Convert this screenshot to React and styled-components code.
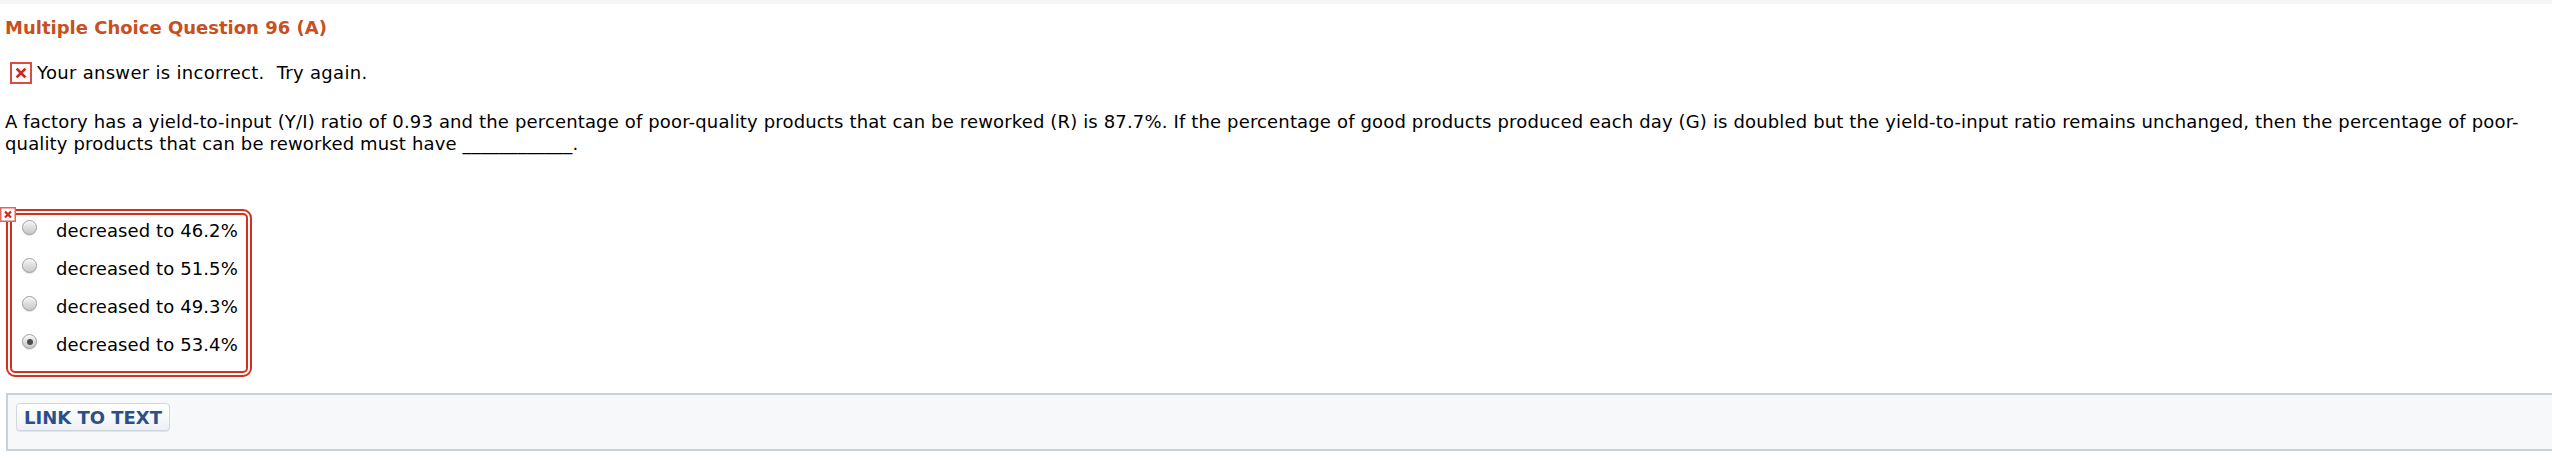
import styled, { createGlobalStyle } from "styled-components";

const GlobalStyle = createGlobalStyle`
  html, body {
    margin: 0;
    padding: 0;
    background: #fff;
    overflow: hidden;
  }
  body {
    font-family: "DejaVu Sans", Verdana, sans-serif;
    font-size: 18px;
    line-height: 22px;
    color: #000;
  }
`;

const options = [
  { id: "a", label: "decreased to 46.2%" },
  { id: "b", label: "decreased to 51.5%" },
  { id: "c", label: "decreased to 49.3%" },
  { id: "d", label: "decreased to 53.4%", checked: true },
];

const TopStrip = styled.div`
  height: 4px;
  background: #f4f5f7;
`;

const Page = styled.div`
  padding: 13px 0 0 5px;
`;

const Title = styled.h1`
  margin: 0;
  font-size: 18px;
  line-height: 22px;
  font-weight: bold;
  color: #c8501d;
`;

const Feedback = styled.div`
  display: flex;
  align-items: center;
  gap: 5px;
  margin: 23px 0 0 5px;
  height: 22px;
  letter-spacing: 0.3px;
`;

const Question = styled.p`
  margin: 27px 0 0;
  padding-right: 8px;
  letter-spacing: 0.15px;
`;

const AnswerWrap = styled.div`
  position: relative;
  display: inline-block;
  margin: 54px 0 0 1px;
`;

const ErrorMark = styled.span`
  position: absolute;
  left: -6px;
  top: -4px;
  width: 16px;
  height: 15px;
  display: block;
`;

const AnswerBox = styled.div`
  border: 6px double #d4301f;
  border-radius: 9px;
  padding: 5px 8px 15px 10px;
  display: flex;
  flex-direction: column;
  gap: 16px;
`;

const OptionRow = styled.label`
  display: flex;
  align-items: flex-start;
  gap: 19px;
  font-size: 18px;
  line-height: 22px;
  letter-spacing: 0.1px;
`;

const Radio = styled.span`
  flex: none;
  width: 15px;
  height: 15px;
  box-sizing: border-box;
  border-radius: 50%;
  border: 1px solid #9c9c9c;
  background: linear-gradient(#f4f4f4, #c8c8c8);
  box-shadow: inset 0 1px 1px rgba(255, 255, 255, 0.9), 0 1px 1px rgba(0, 0, 0, 0.12);
  display: flex;
  align-items: center;
  justify-content: center;

  &::after {
    content: "";
    display: ${({ $checked }) => ($checked ? "block" : "none")};
    width: 6px;
    height: 6px;
    border-radius: 50%;
    background: #4d4d4d;
  }
`;

const Panel = styled.div`
  margin: 16px -20px 0 1px;
  border: 2px solid #c9d1dc;
  background: #f7f8fa;
  padding: 8px 8px 18px;
`;

const LinkButton = styled.button`
  height: 28px;
  padding: 0 7px;
  border: 1px solid #cfd7e1;
  border-radius: 4px;
  background: linear-gradient(#ffffff, #eef1f5);
  box-shadow: 0 1px 0 #dfe4ea;
  font-family: "DejaVu Sans", Verdana, sans-serif;
  font-size: 18px;
  font-weight: bold;
  color: #2d4f88;
  cursor: pointer;
`;

const XIcon = ({ size, stroke }) => (
  <svg width={size} height={size} viewBox="0 0 22 22">
    <rect x="1" y="1" width="20" height="20" fill="#fff" stroke="#dc4b40" strokeWidth={stroke} />
    <path d="M7.5 7.5 L14.5 14.5 M14.5 7.5 L7.5 14.5" stroke="#d8241b" strokeWidth="2.6" strokeLinecap="square" />
  </svg>
);

export default function App() {
  return (
    <>
      <GlobalStyle />
      <TopStrip />
      <Page>
        <Title>Multiple Choice Question 96 (A)</Title>
        <Feedback>
          <XIcon size={22} stroke={2} />
          <span>Your answer is incorrect.&nbsp; Try again.</span>
        </Feedback>
        <Question>
          A factory has a yield-to-input (Y/I) ratio of 0.93 and the percentage of poor-quality products that can be
          reworked (R) is 87.7%. If the percentage of good products produced each day (G) is doubled but the
          yield-to-input ratio remains unchanged, then the percentage of poor-quality products that can be reworked
          must have ____________.
        </Question>
        <AnswerWrap>
          <ErrorMark>
            <svg width="16" height="15" viewBox="0 0 16 15">
              <rect x="0.75" y="0.75" width="14.5" height="13.5" fill="#fff" stroke="#e0665d" strokeWidth="1.5" />
              <path d="M5 4.5 L11 10.5 M11 4.5 L5 10.5" stroke="#d8241b" strokeWidth="2.2" />
            </svg>
          </ErrorMark>
          <AnswerBox>
            {options.map((o) => (
              <OptionRow key={o.id}>
                <Radio $checked={o.checked} />
                <span>{o.label}</span>
              </OptionRow>
            ))}
          </AnswerBox>
        </AnswerWrap>
        <Panel>
          <LinkButton>LINK TO TEXT</LinkButton>
        </Panel>
      </Page>
    </>
  );
}
